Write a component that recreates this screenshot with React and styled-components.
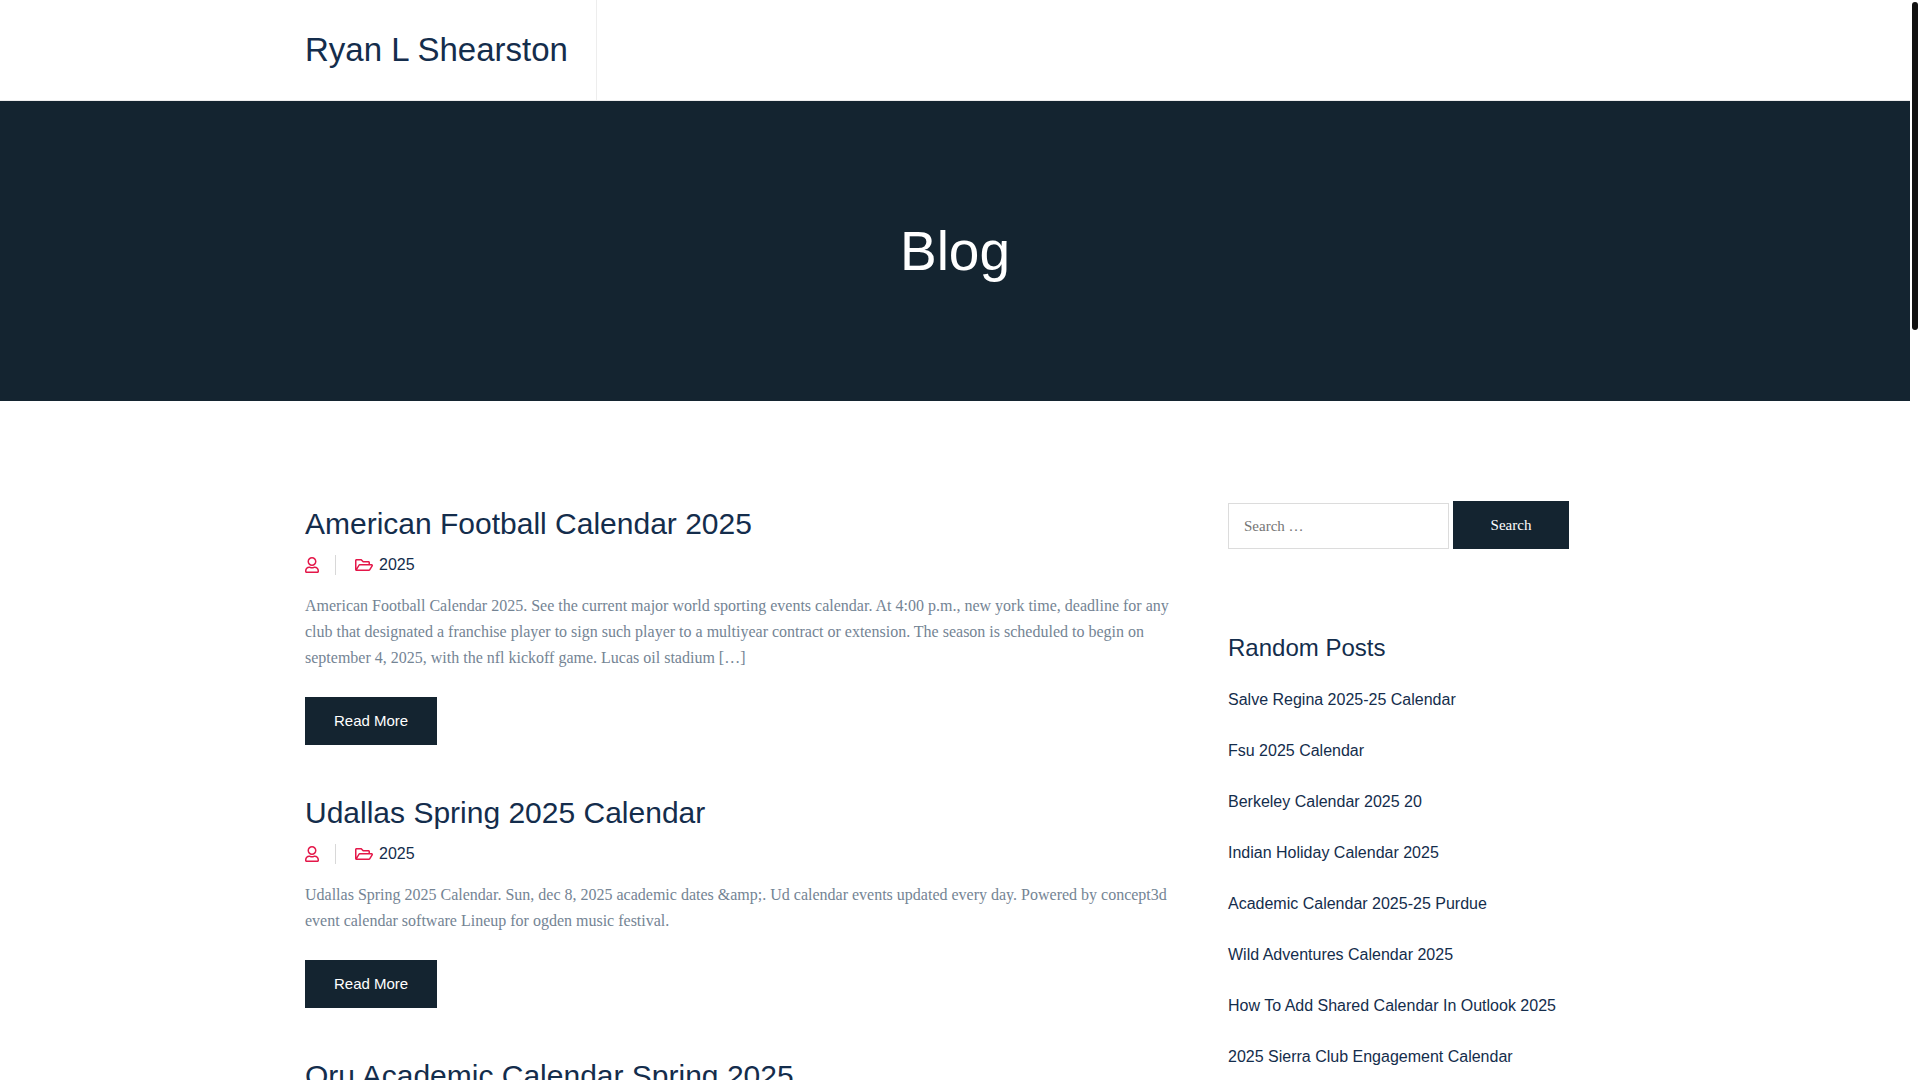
import React from 'react';
import styled, { createGlobalStyle } from 'styled-components';
import { FaRegUser, FaRegFolderOpen } from 'react-icons/fa';

let posts = [
    {
        title: 'American Football Calendar 2025',
        category: '2025',
        excerpt: 'American Football Calendar 2025. See the current major world sporting events calendar. At 4:00 p.m., new york time, deadline for any club that designated a franchise player to sign such player to a multiyear contract or extension. The season is scheduled to begin on september 4, 2025, with the nfl kickoff game. Lucas oil stadium […]'
    },
    {
        title: 'Udallas Spring 2025 Calendar',
        category: '2025',
        excerpt: 'Udallas Spring 2025 Calendar. Sun, dec 8, 2025 academic dates &amp;. Ud calendar events updated every day. Powered by concept3d event calendar software Lineup for ogden music festival.'
    },
    {
        title: 'Oru Academic Calendar Spring 2025'
    }
];

let randomPosts = [
    'Salve Regina 2025-25 Calendar',
    'Fsu 2025 Calendar',
    'Berkeley Calendar 2025 20',
    'Indian Holiday Calendar 2025',
    'Academic Calendar 2025-25 Purdue',
    'Wild Adventures Calendar 2025',
    'How To Add Shared Calendar In Outlook 2025',
    '2025 Sierra Club Engagement Calendar'
];

let dark = '#142430';
let navy = '#142d4c';
let sans = '"Liberation Sans", Arial, sans-serif';
let serif = '"Liberation Serif", "Times New Roman", serif';

var GlobalStyle = createGlobalStyle`
    *, *::before, *::after {
        box-sizing: border-box;
    }

    body {
        margin: 0;
        background: #fff;
        color: #748494;
        font-family: ${serif};
        font-size: 16px;
        line-height: 26px;
    }

    h1, h2, h3, p, ul {
        margin: 0;
        font-weight: 400;
    }

    a {
        color: inherit;
        text-decoration: none;
    }
`;

var Page = styled.div`
    height: 100vh;
    overflow: hidden;
    padding-right: 10px;
`;

var Container = styled.div`
    max-width: 1330px;
    margin: 0 auto;
    padding: 0 15px;
`;

var Header = styled.header`
    border-bottom: 1px solid #ededed;
`;

var Brand = styled.a`
    display: inline-flex;
    align-items: center;
    height: 100px;
    padding-right: 28px;
    border-right: 1px solid #ededed;
    vertical-align: top;
    font-family: ${sans};
    font-size: 33px;
    color: ${navy};
`;

var Banner = styled.section`
    display: flex;
    align-items: center;
    justify-content: center;
    height: 300px;
    background: ${dark};

    h1 {
        font-family: ${sans};
        font-size: 55px;
        line-height: 66px;
        color: #fff;
    }
`;

var Columns = styled(Container)`
    display: grid;
    grid-template-columns: minmax(0, 1fr) 377px;
    gap: 56px;
    padding-top: 100px;
`;

var Posts = styled.main`
    display: flex;
    flex-direction: column;
    gap: 45px;
`;

var PostTitle = styled.h2`
    font-family: ${sans};
    font-size: 30px;
    line-height: 46px;
    color: ${navy};
`;

var Meta = styled.div`
    display: flex;
    align-items: center;
    height: 36px;
    font-family: ${sans};
    color: ${navy};

    svg {
        color: #e41749;
    }
`;

var Author = styled.span`
    display: flex;
    align-items: center;
    height: 20px;
    margin-right: 19px;
    padding-right: 16px;
    border-right: 1px solid #d8d8d8;
`;

var UserIcon = styled(FaRegUser)`
    width: 14px;
    height: 16px;
`;

var Category = styled.a`
    display: flex;
    align-items: center;
    gap: 6px;
`;

var Excerpt = styled.p`
    padding: 10px 0 26px;
`;

var ReadMore = styled.a`
    display: inline-block;
    padding: 0 29px;
    background: ${dark};
    font-family: ${sans};
    font-size: 15px;
    line-height: 48px;
    color: #fff;
    vertical-align: top;
`;

var SearchForm = styled.form`
    display: flex;
    align-items: flex-end;
    gap: 4px;
`;

var SearchInput = styled.input`
    width: 221px;
    height: 46px;
    padding: 0 15px;
    border: 1px solid #dcdcdc;
    border-radius: 0;
    font-family: ${serif};
    font-size: 15px;

    &::placeholder {
        color: #757575;
    }
`;

var SearchButton = styled.button`
    width: 116px;
    height: 48px;
    padding: 0;
    border: 0;
    background: ${dark};
    font-family: ${serif};
    font-size: 15px;
    color: #fff;
`;

var WidgetTitle = styled.h3`
    margin: 84px 0 24px;
    font-family: ${sans};
    font-size: 24px;
    line-height: 30px;
    color: ${navy};
`;

var LinkList = styled.ul`
    display: flex;
    flex-direction: column;
    gap: 25px;
    padding: 0;
    list-style: none;
    font-family: ${sans};
    color: ${navy};
`;

var ScrollThumb = styled.div`
    position: fixed;
    top: 2px;
    right: 2px;
    width: 6px;
    height: 328px;
    border-radius: 3px;
    background: #111;
`;

var Post = ({ title, category, excerpt }) => (<article>
    <PostTitle><a href="#post">{title}</a></PostTitle>
    {excerpt && (<>
        <Meta>
            <Author><UserIcon /></Author>
            <Category href="#category"><FaRegFolderOpen size={18} />{category}</Category>
        </Meta>
        <Excerpt>{excerpt}</Excerpt>
        <ReadMore href="#post">Read More</ReadMore>
    </>)}
</article>);

export default function App() {
    return (<>
        <GlobalStyle />
        <Page>
            <Header>
                <Container><Brand href="#home">Ryan L Shearston</Brand></Container>
            </Header>
            <Banner><h1>Blog</h1></Banner>
            <Columns>
                <Posts>
                    {posts.map(p => (<Post key={p.title} {...p} />))}
                </Posts>
                <aside>
                    <SearchForm role="search" onSubmit={e => e.preventDefault()}>
                        <SearchInput type="search" aria-label="Search for:" placeholder="Search …" />
                        <SearchButton type="submit">Search</SearchButton>
                    </SearchForm>
                    <WidgetTitle>Random Posts</WidgetTitle>
                    <LinkList>
                        {randomPosts.map(title => (<li key={title}><a href="#post">{title}</a></li>))}
                    </LinkList>
                </aside>
            </Columns>
        </Page>
        <ScrollThumb />
    </>);
}
